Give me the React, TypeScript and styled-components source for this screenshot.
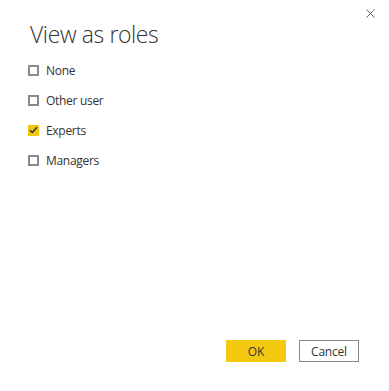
import React, { useState } from "react";
import styled, { createGlobalStyle } from "styled-components";

const Global = createGlobalStyle`
  html, body { margin: 0; padding: 0; background: #fff; }
  * { box-sizing: border-box; }
`;

const Dialog = styled.div`
  position: relative;
  width: 389px;
  height: 391px;
  background: #fff;
  font-family: "Open Sans", "Noto Sans", sans-serif;
  color: #333;
  display: flex;
  flex-direction: column;
  padding: 18px 30px 29px 28px;
`;

const Close = styled.button`
  position: absolute;
  top: 6px;
  right: 12px;
  width: 14px;
  height: 14px;
  padding: 0;
  border: none;
  background: none;
  display: flex;
  align-items: center;
  justify-content: center;
  cursor: pointer;
`;

const Title = styled.h1`
  margin: 0 0 0 2px;
  font-size: 23px;
  font-weight: 300;
  line-height: 32px;
  color: #333;
  letter-spacing: -0.4px;
`;

const List = styled.div`
  display: flex;
  flex-direction: column;
  gap: 10px;
  margin-top: 10px;
`;

const Row = styled.label`
  display: flex;
  align-items: center;
  gap: 7px;
  height: 20px;
  font-size: 12px;
  letter-spacing: -0.3px;
  color: #333;
  cursor: pointer;
`;

const Box = styled.span<{ $checked: boolean }>`
  width: 11px;
  height: 11px;
  flex: none;
  display: flex;
  align-items: center;
  justify-content: center;
  border: ${(p) => (p.$checked ? "none" : "2px solid #8a8a8a")};
  background: ${(p) => (p.$checked ? "#F2C811" : "#fff")};
`;

const Footer = styled.div`
  margin-top: auto;
  display: flex;
  justify-content: flex-end;
  gap: 13px;
`;

const Button = styled.button<{ $primary?: boolean }>`
  width: 60px;
  height: 22px;
  padding: 0;
  font-family: "Open Sans", "Noto Sans", sans-serif;
  font-size: 12px;
  letter-spacing: -0.2px;
  color: #333;
  background: ${(p) => (p.$primary ? "#F2C811" : "#fff")};
  border: ${(p) => (p.$primary ? "none" : "1px solid #8a8a8a")};
  cursor: pointer;
`;

const roles = ["None", "Other user", "Experts", "Managers"];

export default function App() {
  const [checked, setChecked] = useState<Record<string, boolean>>({ Experts: true });
  return (
    <Dialog>
      <Global />
      <Close aria-label="Close">
        <svg width="9" height="9" viewBox="0 0 9 9">
          <path d="M0.5 0.5 L8.5 8.5 M8.5 0.5 L0.5 8.5" stroke="#666" strokeWidth="1" />
        </svg>
      </Close>
      <Title>View as roles</Title>
      <List>
        {roles.map((r) => (
          <Row key={r} onClick={() => setChecked((c) => ({ ...c, [r]: !c[r] }))}>
            <Box $checked={!!checked[r]}>
              {checked[r] && (
                <svg width="9" height="8" viewBox="0 0 9 8">
                  <path d="M1 4.2 L3.3 6.5 L8 1.2" fill="none" stroke="#333" strokeWidth="1.5" />
                </svg>
              )}
            </Box>
            {r}
          </Row>
        ))}
      </List>
      <Footer>
        <Button $primary>OK</Button>
        <Button>Cancel</Button>
      </Footer>
    </Dialog>
  );
}
